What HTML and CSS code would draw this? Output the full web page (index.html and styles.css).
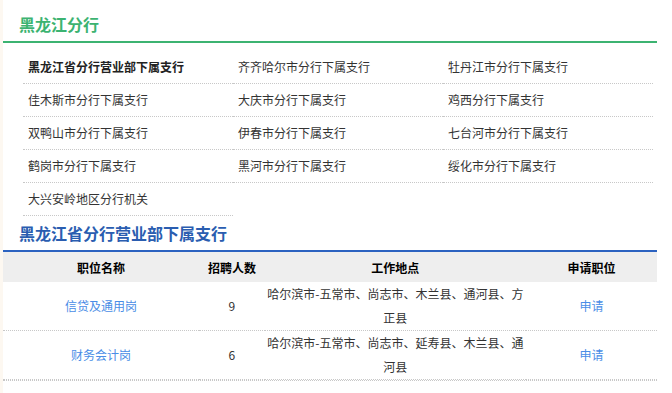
FILE: index.html
```html
<!DOCTYPE html>
<html lang="zh-CN">
<head>
<meta charset="utf-8">
<title>黑龙江分行</title>
<link rel="stylesheet" href="styles.css">
</head>
<body>
<div class="page">
  <h2 class="region-title">黑龙江分行</h2>
  <ul class="branch-list">
    <li class="branch active">黑龙江省分行营业部下属支行</li>
    <li class="branch">齐齐哈尔市分行下属支行</li>
    <li class="branch">牡丹江市分行下属支行</li>
    <li class="branch">佳木斯市分行下属支行</li>
    <li class="branch">大庆市分行下属支行</li>
    <li class="branch">鸡西分行下属支行</li>
    <li class="branch">双鸭山市分行下属支行</li>
    <li class="branch">伊春市分行下属支行</li>
    <li class="branch">七台河市分行下属支行</li>
    <li class="branch">鹤岗市分行下属支行</li>
    <li class="branch">黑河市分行下属支行</li>
    <li class="branch">绥化市分行下属支行</li>
    <li class="branch">大兴安岭地区分行机关</li>
  </ul>
  <h3 class="sub-title">黑龙江省分行营业部下属支行</h3>
  <table class="jobs">
    <colgroup>
      <col class="c-name">
      <col class="c-num">
      <col class="c-place">
      <col class="c-apply">
    </colgroup>
    <thead>
      <tr><th>职位名称</th><th>招聘人数</th><th>工作地点</th><th>申请职位</th></tr>
    </thead>
    <tbody>
      <tr>
        <td><a class="link">信贷及通用岗</a></td>
        <td>9</td>
        <td class="place">哈尔滨市-五常市、尚志市、木兰县、通河县、方正县</td>
        <td><a class="link">申请</a></td>
      </tr>
      <tr>
        <td><a class="link">财务会计岗</a></td>
        <td>6</td>
        <td class="place">哈尔滨市-五常市、尚志市、延寿县、木兰县、通河县</td>
        <td><a class="link">申请</a></td>
      </tr>
    </tbody>
  </table>
</div>
</body>
</html>
```

FILE: styles.css
```css
html, body {
  margin: 0;
  padding: 0;
  background: #fdf8f1;
}
body {
  font-family: "Noto Sans CJK SC", "Noto Sans", sans-serif;
  font-size: 12px;
  color: #333;
}
.page {
  margin-left: 3px;
  background: #fff;
  min-height: 393px;
}
.region-title {
  margin: 0;
  width: 622px;
  padding: 12px 16px 5px;
  line-height: 24px;
  font-size: 16px;
  font-weight: bold;
  color: #3cb371;
  border-bottom: 2px solid #3cb371;
}
.branch-list {
  list-style: none;
  margin: 0;
  padding: 8px 20px 0;
  display: grid;
  grid-template-columns: repeat(3, 210px);
}
.branch {
  height: 32px;
  line-height: 32px;
  padding-left: 5px;
  border-bottom: 1px dotted #c8c8c8;
  white-space: nowrap;
}
.branch.active {
  font-weight: bold;
  color: #222;
}
.sub-title {
  margin: 0;
  width: 622px;
  padding: 5px 16px 5px;
  line-height: 24px;
  font-size: 16px;
  font-weight: bold;
  color: #2a5db0;
  border-bottom: 2px solid #2b62c0;
}
.jobs {
  width: 654px;
  border-collapse: separate;
  border-spacing: 0;
  table-layout: fixed;
  border-bottom: 1px dotted #c8c8c8;
}
.c-name { width: 30%; }
.c-num { width: 10%; }
.c-place { width: 40%; }
.c-apply { width: 20%; }
.jobs th {
  height: 30px;
  padding: 0;
  background: #eeeeee;
  color: #000;
  font-weight: bold;
  font-size: 12px;
  text-align: center;
}
.jobs td {
  padding: 0;
  line-height: 24px;
  text-align: center;
  vertical-align: middle;
  border-bottom: 1px dotted #c8c8c8;
}
.jobs td.place {
  line-break: anywhere;
}
.link {
  color: #4a8de6;
  text-decoration: none;
}
```
